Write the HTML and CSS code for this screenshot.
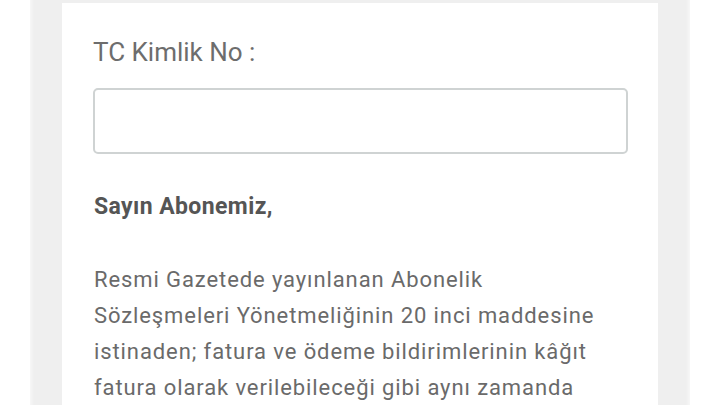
FILE: index.html
```html
<!DOCTYPE html>
<html lang="tr">
<head>
    <meta charset="UTF-8">
    <meta name="viewport" content="width=device-width, initial-scale=1.0">
    <title>Abonelik</title>
    <link rel="stylesheet" href="styles.css">
</head>
<body>
    <div class="page">
        <div class="card">
            <label class="field-label" for="tc">TC Kimlik No :</label>
            <input class="field-input" type="text" id="tc">

            <p class="greeting">Sayın Abonemiz,</p>

            <p class="notice">
                Resmi Gazetede yayınlanan Abonelik Sözleşmeleri Yönetmeliğinin 20 inci maddesine istinaden; fatura ve ödeme bildirimlerinin kâğıt fatura olarak verilebileceği gibi aynı zamanda elektronik ortamda da gönderilebileceği belirtilmektedir.
            </p>
        </div>
    </div>
</body>
</html>
```

FILE: styles.css
```css
body {
    margin: 0;
    padding: 0;
    background: #ffffff;
    font-family: Roboto, "Noto Sans", sans-serif;
    overflow: hidden;
}

.page {
    margin: 0 30px;
    padding: 3px 32px 0;
    height: 405px;
    box-sizing: border-box;
    background: linear-gradient(90deg, #f7f7f7 0, #efefef 4px, #efefef calc(100% - 4px), #f7f7f7 100%);
    overflow: hidden;
}

.card {
    background: #ffffff;
    padding: 34px 31px 20px;
    min-height: 402px;
    box-sizing: border-box;
}

.field-label {
    display: block;
    font-size: 26px;
    line-height: 30px;
    color: #6d6d6d;
}

.field-input {
    display: block;
    box-sizing: border-box;
    width: 535px;
    height: 66px;
    margin-top: 21px;
    border: 2px solid #cfd3d3;
    border-radius: 5px;
    background: #fff;
    font-size: 22px;
    outline: none;
}

.greeting {
    margin: 38px 0 0 1px;
    font-size: 23px;
    font-weight: bold;
    line-height: 30px;
    letter-spacing: 0.4px;
    color: #555555;
}

.notice {
    margin: 40px 0 0 1px;
    width: 515px;
    font-size: 22px;
    line-height: 36px;
    letter-spacing: 0.9px;
    color: #6a6a6a;
}
```
